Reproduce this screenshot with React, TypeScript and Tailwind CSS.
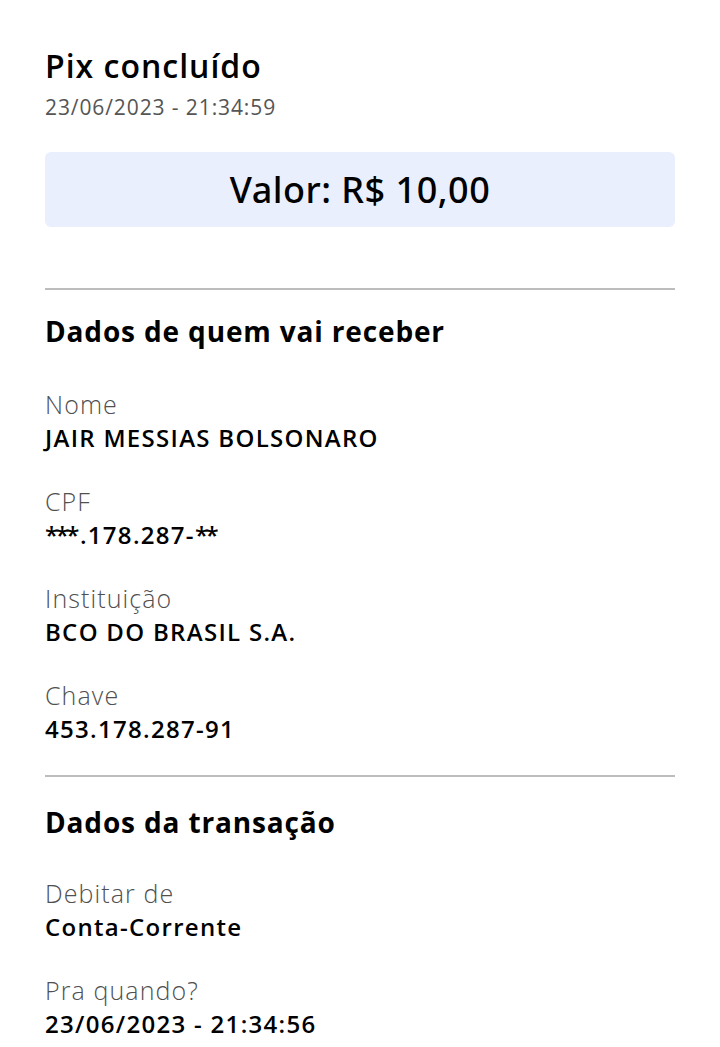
import type { ReactNode } from "react";

const font = { fontFamily: '"Open Sans", "Noto Sans", sans-serif' };

interface FieldProps {
    label: string;
    value: ReactNode;
}

// montserrat-like asterisks are much tighter than Open Sans ones
function Stars({ n }: { n: number }) {
    return <span className="tracking-[-2.5px] pr-[3px]">{"*".repeat(n)}</span>;
}

function Field({ label, value }: FieldProps) {
    return (
        <div className="flex flex-col">
            <span className="text-[25px] leading-[32px] font-light tracking-[1.1px] text-[#505050]">{label}</span>
            <span className="mt-[2px] text-[24px] leading-[32px] font-semibold tracking-[1.3px] text-black">{value}</span>
        </div>
    );
}

function Section({ title, items, headTop, listTop }: { title: string; items: FieldProps[]; headTop: string; listTop: string }) {
    return (
        <div className="flex flex-col">
            <h2 className={`${headTop} text-[28px] leading-[36px] font-bold tracking-[0.85px] text-black`}>{title}</h2>
            <div className={`${listTop} flex flex-col gap-[31px]`}>
                {items.map((it) => (
                    <Field key={it.label} label={it.label} value={it.value} />
                ))}
            </div>
        </div>
    );
}

export default function App() {
    return (
        <div style={font} className="w-[720px] h-[1047px] bg-white px-[45px] pt-[46px] overflow-hidden">
            <h1 className="text-[32px] leading-[40px] font-semibold tracking-[1px] text-black">Pix concluído</h1>
            <p className="mt-[7px] text-[21px] leading-[28px] tracking-[0.9px] text-[#555555]">23/06/2023 - 21:34:59</p>

            <div className="mt-[31px] h-[75px] rounded-[6px] bg-[#e9effc] flex items-center justify-center">
                <span
                    className="text-[36px] font-medium tracking-[0.5px] text-black"
                    style={{ fontFamily: '"Noto Sans", sans-serif' }}
                >
                    Valor: R$ 10,00
                </span>
            </div>

            <div className="mt-[61px] h-[2px] bg-[#bdbdbd]" />
            <Section
                headTop="mt-[23px]"
                listTop="mt-[39px]"
                title="Dados de quem vai receber"
                items={[
                    { label: "Nome", value: "JAIR MESSIAS BOLSONARO" },
                    {
                        label: "CPF",
                        value: (
                            <>
                                <Stars n={3} />
                                .178.287-
                                <Stars n={2} />
                            </>
                        ),
                    },
                    { label: "Instituição", value: "BCO DO BRASIL S.A." },
                    { label: "Chave", value: "453.178.287-91" },
                ]}
            />

            <div className="mt-[30px] h-[2px] bg-[#bdbdbd]" />
            <Section
                headTop="mt-[27px]"
                listTop="mt-[37px]"
                title="Dados da transação"
                items={[
                    { label: "Debitar de", value: "Conta-Corrente" },
                    { label: "Pra quando?", value: "23/06/2023 - 21:34:56" },
                ]}
            />
        </div>
    );
}
